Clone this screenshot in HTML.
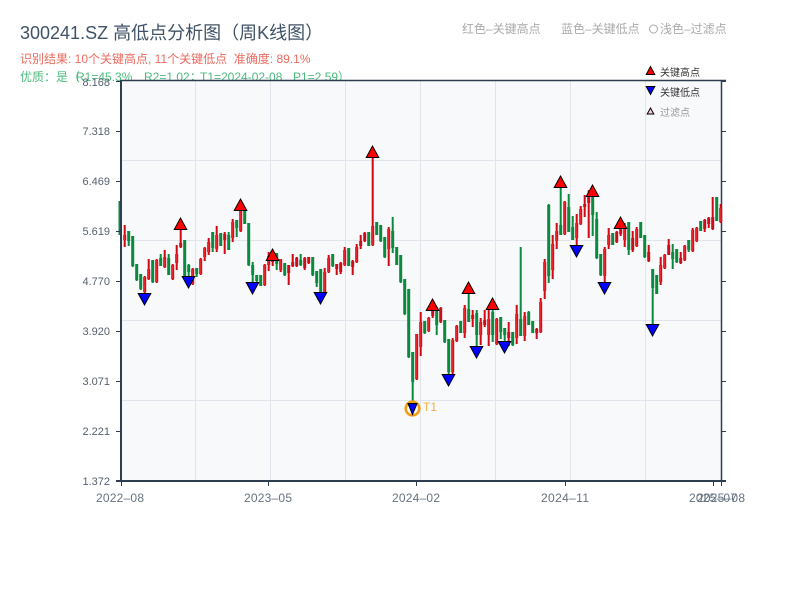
<!DOCTYPE html>
<html lang="zh">
<head>
<meta charset="utf-8">
<title>300241.SZ 高低点分析图</title>
<style>
html,body{margin:0;padding:0;background:#fff;width:800px;height:600px;overflow:hidden}
svg{display:block;font-family:"Liberation Sans","Noto Sans CJK SC",sans-serif}
</style>
</head>
<body>
<svg width="800" height="600" viewBox="0 0 800 600" xmlns="http://www.w3.org/2000/svg">
<rect width="800" height="600" fill="#fff"/>
<text x="20" y="39" font-size="18" fill="#3f5266">300241.SZ 高低点分析图（周K线图）</text>
<text x="20" y="63" font-size="12" fill="#ec6a5e">识别结果: 10个关键高点, 11个关键低点 &#160;准确度: 89.1%</text>
<text x="20" y="81" font-size="12" fill="#4cbb7d">优质：是（<tspan x="76">R1=45.3%,</tspan><tspan x="144">R2=1.02；</tspan><tspan x="200">T1=2024-02-08</tspan><tspan x="293">P1=2.59）</tspan></text>

<text x="462" y="33" font-size="12" fill="#aaa">红色–关键高点</text>
<text x="561" y="33" font-size="12" fill="#aaa">蓝色–关键低点</text>
<circle cx="653.5" cy="29" r="4" fill="none" stroke="#aaa" stroke-width="1"/>
<text x="660" y="33" font-size="12" fill="#aaa">浅色–过滤点</text>

<rect x="121" y="81" width="600" height="400" fill="#f8f9fb"/>
<path d="M195.5 81V481M270.5 81V481M345.5 81V481M420.5 81V481M495.5 81V481M570.5 81V481M645.5 81V481M121 160.5H721M121 240.5H721M121 320.5H721M121 400.5H721" stroke="#e1e4ea" stroke-width="1" fill="none"/>

<!-- left edge candle -->
<path d="M120 201V235" stroke="#0a8a3c" stroke-width="3"/>

<!-- axes -->
<path d="M121 80.5H726" stroke="#2c3e50" stroke-width="1.5" fill="none"/>
<path d="M116 481H726" stroke="#2c3e50" stroke-width="2" fill="none"/>
<path d="M121 80V482" stroke="#2c3e50" stroke-width="2" fill="none"/>
<path d="M721.5 80V482" stroke="#2c3e50" stroke-width="1.5" fill="none"/>
<path d="M116 81.5H121M116 131.5H121M116 181.5H121M116 231.5H121M116 281.5H121M116 331.5H121M116 381.5H121M116 431.5H121M721 81.5H726M721 131.5H726M721 181.5H726M721 231.5H726M721 281.5H726M721 331.5H726M721 381.5H726M721 431.5H726M121.5 481V486M268.5 481V486M416.5 481V486M565.5 481V486M713.5 481V486M721.5 481V486" stroke="#2c3e50" stroke-width="1" fill="none"/>

<g font-size="11" fill="#56616f" text-anchor="end">
<text x="110" y="86">8.168</text>
<text x="110" y="135">7.318</text>
<text x="110" y="185">6.469</text>
<text x="110" y="235">5.619</text>
<text x="110" y="285">4.770</text>
<text x="110" y="335">3.920</text>
<text x="110" y="385">3.071</text>
<text x="110" y="435">2.221</text>
<text x="110" y="485">1.372</text>
</g>
<g font-size="12" fill="#667280">
<text x="96" y="502" textLength="48">2022–08</text>
<text x="244" y="502" textLength="48">2023–05</text>
<text x="392" y="502" textLength="48">2024–02</text>
<text x="541" y="502" textLength="48">2024–11</text>
<text x="689" y="502" textLength="48">2025–07</text>
<text x="697" y="502" textLength="48">2025–08</text>
</g>

<g transform="translate(0.2 0)">
<!-- green wicks -->
<path stroke="#0a8a3c" stroke-width="2" fill="none" d="M128.5 231V246M132.5 236V267M136.5 264V281M140.5 274V290M152.5 260V283M160.5 254V266M168.5 254V275M184.5 240V277M188.5 264V276M196.5 268V277M212.5 232V252M220.5 233V246M228.5 232V250M236.5 220V237M244.5 211V224M248.5 223V266M252.5 262V282M256.5 275V282M260.5 275V286M276.5 253V270M284.5 263V276M300.5 254V266M312.5 257V276M316.5 271V287M320.5 279V292M332.5 254V267M348.5 248V266M368.5 232V246M376.5 222V235M380.5 225V242M384.5 237V258M392.5 217V253M396.5 247V265M400.5 255V283M404.5 279V315M408.5 289V358M412.5 352V402M424.5 321V334M436.5 307V335M444.5 320V343M448.5 339V374M460.5 321V333M468.5 292V322M476.5 310V347M492.5 310V342M500.5 317V339M504.5 328V342M512.5 332V346M520.5 247V336M528.5 311V325M532.5 321V333M548.5 204V283M560.5 187V235M568.5 194V232M572.5 216V240M592.5 196V236M596.5 212V259M600.5 254V276M612.5 233V245M628.5 222V255M640.5 222V238M644.5 235V258M652.5 269V325M656.5 275V294M672.5 244V269M676.5 249V263M688.5 240V252M700.5 221V231M716.5 197V221"/>
<!-- green bodies -->
<path stroke="#0a8a3c" stroke-width="3" fill="none" d="M128.5 231V241M132.5 236V266M136.5 264V280M140.5 274V289M152.5 260V282M160.5 258V266M168.5 258V275M184.5 240V276M188.5 265V272M196.5 268V274M212.5 232V248M220.5 233V246M228.5 235V250M236.5 220V228M244.5 211V224M248.5 223V265M252.5 265V275M256.5 275V281M260.5 275V286M276.5 253V264M284.5 263V275M300.5 260V265M312.5 257V275M316.5 271V283M320.5 269V292M332.5 254V266M348.5 248V266M368.5 232V246M376.5 222V235M380.5 225V241M384.5 237V257M392.5 231V248M396.5 247V265M400.5 255V282M404.5 279V314M408.5 289V357M412.5 352V382M424.5 321V333M436.5 310V325M444.5 320V342M448.5 339V372M460.5 321V333M468.5 309V322M476.5 313V335M492.5 312V335M500.5 317V332M504.5 328V335M512.5 332V345M520.5 319V336M528.5 312V325M532.5 321V333M548.5 205V276M560.5 225V235M568.5 207V232M572.5 227V240M592.5 196V215M596.5 219V258M600.5 254V275M612.5 233V245M628.5 222V250M640.5 222V238M644.5 235V257M652.5 269V288M656.5 275V294M672.5 252V259M676.5 249V262M688.5 240V250M700.5 221V231M716.5 197V221"/>

<!-- red wicks -->
<path stroke="#d00812" stroke-width="2" fill="none" d="M124.5 225V247M144.5 276V293M148.5 259V280M156.5 259V283M164.5 250V268M172.5 264V280M176.5 245V270M180.5 229V248M192.5 268V285M200.5 258V275M204.5 247V261M208.5 238V255M216.5 226V252M224.5 232V254M232.5 219V242M240.5 210V232M264.5 264V286M268.5 252V271M272.5 256V266M280.5 259V272M288.5 265V285M292.5 254V267M296.5 257V267M304.5 257V270M308.5 257V264M324.5 268V292M328.5 255V273M336.5 264V275M340.5 262V274M344.5 247V266M352.5 260V275M356.5 244V263M360.5 235V249M364.5 232V242M372.5 155V246M388.5 227V266M416.5 334V380M420.5 312V356M428.5 317V332M432.5 307V318M440.5 307V323M452.5 338V374M456.5 325V342M464.5 305V338M472.5 310V327M480.5 318V345M484.5 310V327M488.5 307V346M496.5 318V345M508.5 322V346M516.5 305V344M524.5 312V341M536.5 328V339M540.5 298V333M544.5 259V299M552.5 235V279M556.5 223V249M564.5 201V235M576.5 214V245M580.5 206V225M584.5 195V217M588.5 190V238M604.5 247V282M608.5 228V249M616.5 231V243M620.5 223V236M624.5 223V247M632.5 231V252M636.5 227V247M648.5 245V262M660.5 257V285M664.5 254V269M668.5 239V255M680.5 252V264M684.5 245V261M692.5 228V252M696.5 227V242M704.5 219V232M708.5 217V228M712.5 197V230M720.5 204V223"/>
<!-- red bodies -->
<path stroke="#c8101c" stroke-width="3" fill="none" d="M124.5 235V240M144.5 277V292M148.5 269V279M156.5 260V282M164.5 257V267M172.5 265V279M176.5 254V263M180.5 243V247M192.5 269V284M200.5 259V274M204.5 248V257M208.5 242V252M216.5 235V249M224.5 234V240M232.5 222V238M240.5 210V231M264.5 265V285M268.5 256V265M272.5 257V262M280.5 259V270M288.5 265V273M292.5 262V266M296.5 258V266M304.5 258V268M308.5 257V263M324.5 272V292M328.5 258V272M336.5 264V269M340.5 263V272M344.5 250V265M352.5 261V267M356.5 247V262M360.5 241V246M364.5 233V241M372.5 226V245M388.5 229V249M416.5 334V379M420.5 322V347M428.5 318V331M432.5 307V316M440.5 308V322M452.5 340V372M456.5 326V341M464.5 308V333M472.5 315V319M480.5 322V335M484.5 320V325M488.5 319V335M496.5 319V344M508.5 332V338M516.5 314V338M524.5 316V336M536.5 329V333M540.5 302V332M544.5 262V291M552.5 244V270M556.5 231V241M564.5 202V234M576.5 223V238M580.5 209V224M584.5 204V207M588.5 196V203M604.5 249V276M608.5 235V245M616.5 232V242M620.5 225V234M624.5 226V240M632.5 238V250M636.5 229V246M648.5 252V261M660.5 265V282M664.5 255V268M668.5 245V255M680.5 258V263M684.5 246V260M692.5 230V251M696.5 228V241M704.5 220V229M708.5 218V224M712.5 217V229M720.5 208V222"/>
<path stroke="#f0282e" stroke-width="1" fill="none" d="M124.5 235V240M144.5 277V292M148.5 269V279M156.5 260V282M164.5 257V267M172.5 265V279M176.5 254V263M192.5 269V284M200.5 259V274M204.5 248V257M208.5 242V252M216.5 235V249M232.5 222V238M240.5 210V231M264.5 265V285M268.5 256V265M280.5 259V270M324.5 272V292M328.5 258V272M344.5 250V265M356.5 247V262M372.5 226V245M388.5 229V249M416.5 334V379M420.5 322V347M428.5 318V331M452.5 340V372M456.5 326V341M464.5 308V333M480.5 322V335M488.5 319V335M496.5 319V344M516.5 314V338M524.5 316V336M540.5 302V332M544.5 262V291M552.5 244V270M556.5 231V241M564.5 202V234M576.5 223V238M580.5 209V224M604.5 249V276M608.5 235V245M624.5 226V240M636.5 229V246M660.5 265V282M664.5 255V268M684.5 246V260M692.5 230V251M696.5 228V241M720.5 208V222"/>
</g>

<!-- red markers -->
<g fill="#f00" stroke="#000" stroke-width="1" stroke-linejoin="miter">
<path d="M180.5 218L186.8 229.5H174.2Z"/>
<path d="M240.5 199L246.8 210.5H234.2Z"/>
<path d="M272.5 249L278.8 260.5H266.2Z"/>
<path d="M372.5 146L378.8 157.5H366.2Z"/>
<path d="M432.5 299L438.8 310.5H426.2Z"/>
<path d="M468.5 282L474.8 293.5H462.2Z"/>
<path d="M492.5 298L498.8 309.5H486.2Z"/>
<path d="M560.5 176L566.8 187.5H554.2Z"/>
<path d="M592.5 185L598.8 196.5H586.2Z"/>
<path d="M620.5 217L626.8 228.5H614.2Z"/>
</g>
<!-- blue markers -->
<g fill="#00f" stroke="#000" stroke-width="1" stroke-linejoin="miter">
<path d="M144.5 305L150.8 293.5H138.2Z"/>
<path d="M188.5 288L194.8 276.5H182.2Z"/>
<path d="M252.5 294L258.8 282.5H246.2Z"/>
<path d="M320.5 304L326.8 292.5H314.2Z"/>
<path d="M448.5 386L454.8 374.5H442.2Z"/>
<path d="M476.5 358L482.8 346.5H470.2Z"/>
<path d="M504.5 353L510.8 341.5H498.2Z"/>
<path d="M576.5 257L582.8 245.5H570.2Z"/>
<path d="M604.5 294L610.8 282.5H598.2Z"/>
<path d="M652.5 336L658.8 324.5H646.2Z"/>
</g>
<!-- T1 -->
<circle cx="412.5" cy="408.5" r="6.8" fill="none" stroke="#f39c12" stroke-width="2.6"/>
<path d="M412.5 414.5L417 403.5H408Z" fill="#00f" stroke="#000" stroke-width="1"/>
<text x="423" y="411" font-size="12" fill="#f5b041">T1</text>

<!-- legend -->
<path d="M650.5 66.5L654.8 74.5H646.2Z" fill="#f00" stroke="#000" stroke-width="1"/>
<text x="660" y="76" font-size="10" fill="#333">关键高点</text>
<path d="M650.5 94.5L654.8 86.5H646.2Z" fill="#00f" stroke="#000" stroke-width="1"/>
<text x="660" y="96" font-size="10" fill="#333">关键低点</text>
<path d="M650.5 108L653.8 114H647.2Z" fill="#fcd" stroke="#000" stroke-width="1"/>
<text x="660" y="116" font-size="10" fill="#999">过滤点</text>
</svg>
</body>
</html>
